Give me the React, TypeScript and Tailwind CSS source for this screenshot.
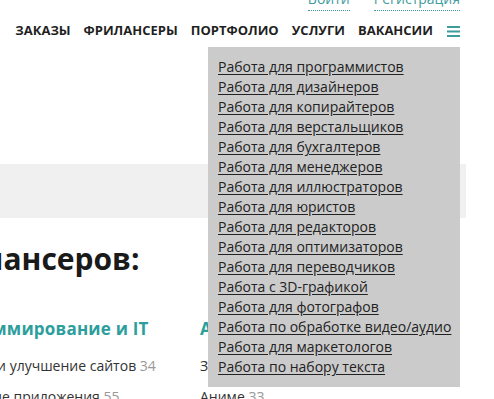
import React from 'react';

const jobs = [
  'Работа для программистов',
  'Работа для дизайнеров',
  'Работа для копирайтеров',
  'Работа для верстальщиков',
  'Работа для бухгалтеров',
  'Работа для менеджеров',
  'Работа для иллюстраторов',
  'Работа для юристов',
  'Работа для редакторов',
  'Работа для оптимизаторов',
  'Работа для переводчиков',
  'Работа с 3D-графикой',
  'Работа для фотографов',
  'Работа по обработке видео/аудио',
  'Работа для маркетологов',
  'Работа по набору текста',
];

const nav = ['Заказы', 'Фрилансеры', 'Портфолио', 'Услуги', 'Вакансии'];

const App: React.FC = () => {
  return (
    <div className="relative w-[494px] h-[399px] overflow-hidden bg-white font-['Open_Sans',sans-serif] text-[#222]">
      {/* top auth links, cropped at the top edge */}
      <div className="flex justify-end gap-[24px] pr-[34px] mt-[-11px] h-[22px] text-[14px] leading-[20px] text-[#3f9c9c]">
        <span className="border-b border-dotted border-[#3f9c9c]">Войти</span>
        <span className="border-b border-dotted border-[#3f9c9c]">Регистрация</span>
      </div>

      <nav className="flex items-center justify-end gap-[13px] pr-[34px] h-[22px] mt-[9px]">
        {nav.map((n) => (
          <span key={n} className="text-[13px] font-bold uppercase text-[#1f1f1f] whitespace-nowrap">
            {n}
          </span>
        ))}
        <svg width="13" height="11" viewBox="0 0 13 11" className="ml-px">
          <rect x="0" y="0" width="13" height="2" fill="#3f9c9c" />
          <rect x="0" y="4.5" width="13" height="2" fill="#3f9c9c" />
          <rect x="0" y="9" width="13" height="2" fill="#3f9c9c" />
        </svg>
      </nav>

      <div className="mt-[122px] w-[466px] h-[54px] bg-[#f0f0f0]" />

      <h1 className="ml-[-214px] mt-[22px] text-[30px] leading-[38px] font-bold text-[#1a1a1a] whitespace-nowrap">
        Каталог фрилансеров:
      </h1>

      <div className="ml-[-72px] mt-[39px] grid grid-cols-[272px_1fr]">
        <div className="whitespace-nowrap">
          <h2 className="text-[17px] leading-[24px] font-bold tracking-[0.2px] text-[#2c9e9c]">Программирование и IT</h2>
          <div className="mt-[9px] text-[14px] leading-[31px] text-[#333]">
            <div>
              Создание и улучшение сайтов <span className="text-[#999]">34</span>
            </div>
            <div>
              Мобильные приложения <span className="text-[#999]">55</span>
            </div>
          </div>
        </div>
        <div className="whitespace-nowrap">
          <h2 className="text-[17px] leading-[24px] font-bold tracking-[0.2px] text-[#2c9e9c]">Аудио и видео</h2>
          <div className="mt-[9px] text-[14px] leading-[31px] text-[#333]">
            <div>
              Звук <span className="text-[#999]">12</span>
            </div>
            <div>
              Аниме <span className="text-[#999]">33</span>
            </div>
          </div>
        </div>
      </div>

      {/* dropdown menu */}
      <div className="absolute left-[208px] top-[47px] w-[252px] bg-[#cbcbcb] py-[10px] px-[10px]">
        {jobs.map((j) => (
          <div key={j} className="text-[14px] leading-[20px] whitespace-nowrap">
            <a className="underline underline-offset-[2px] text-[#222]">{j}</a>
          </div>
        ))}
      </div>
    </div>
  );
};

export default App;
